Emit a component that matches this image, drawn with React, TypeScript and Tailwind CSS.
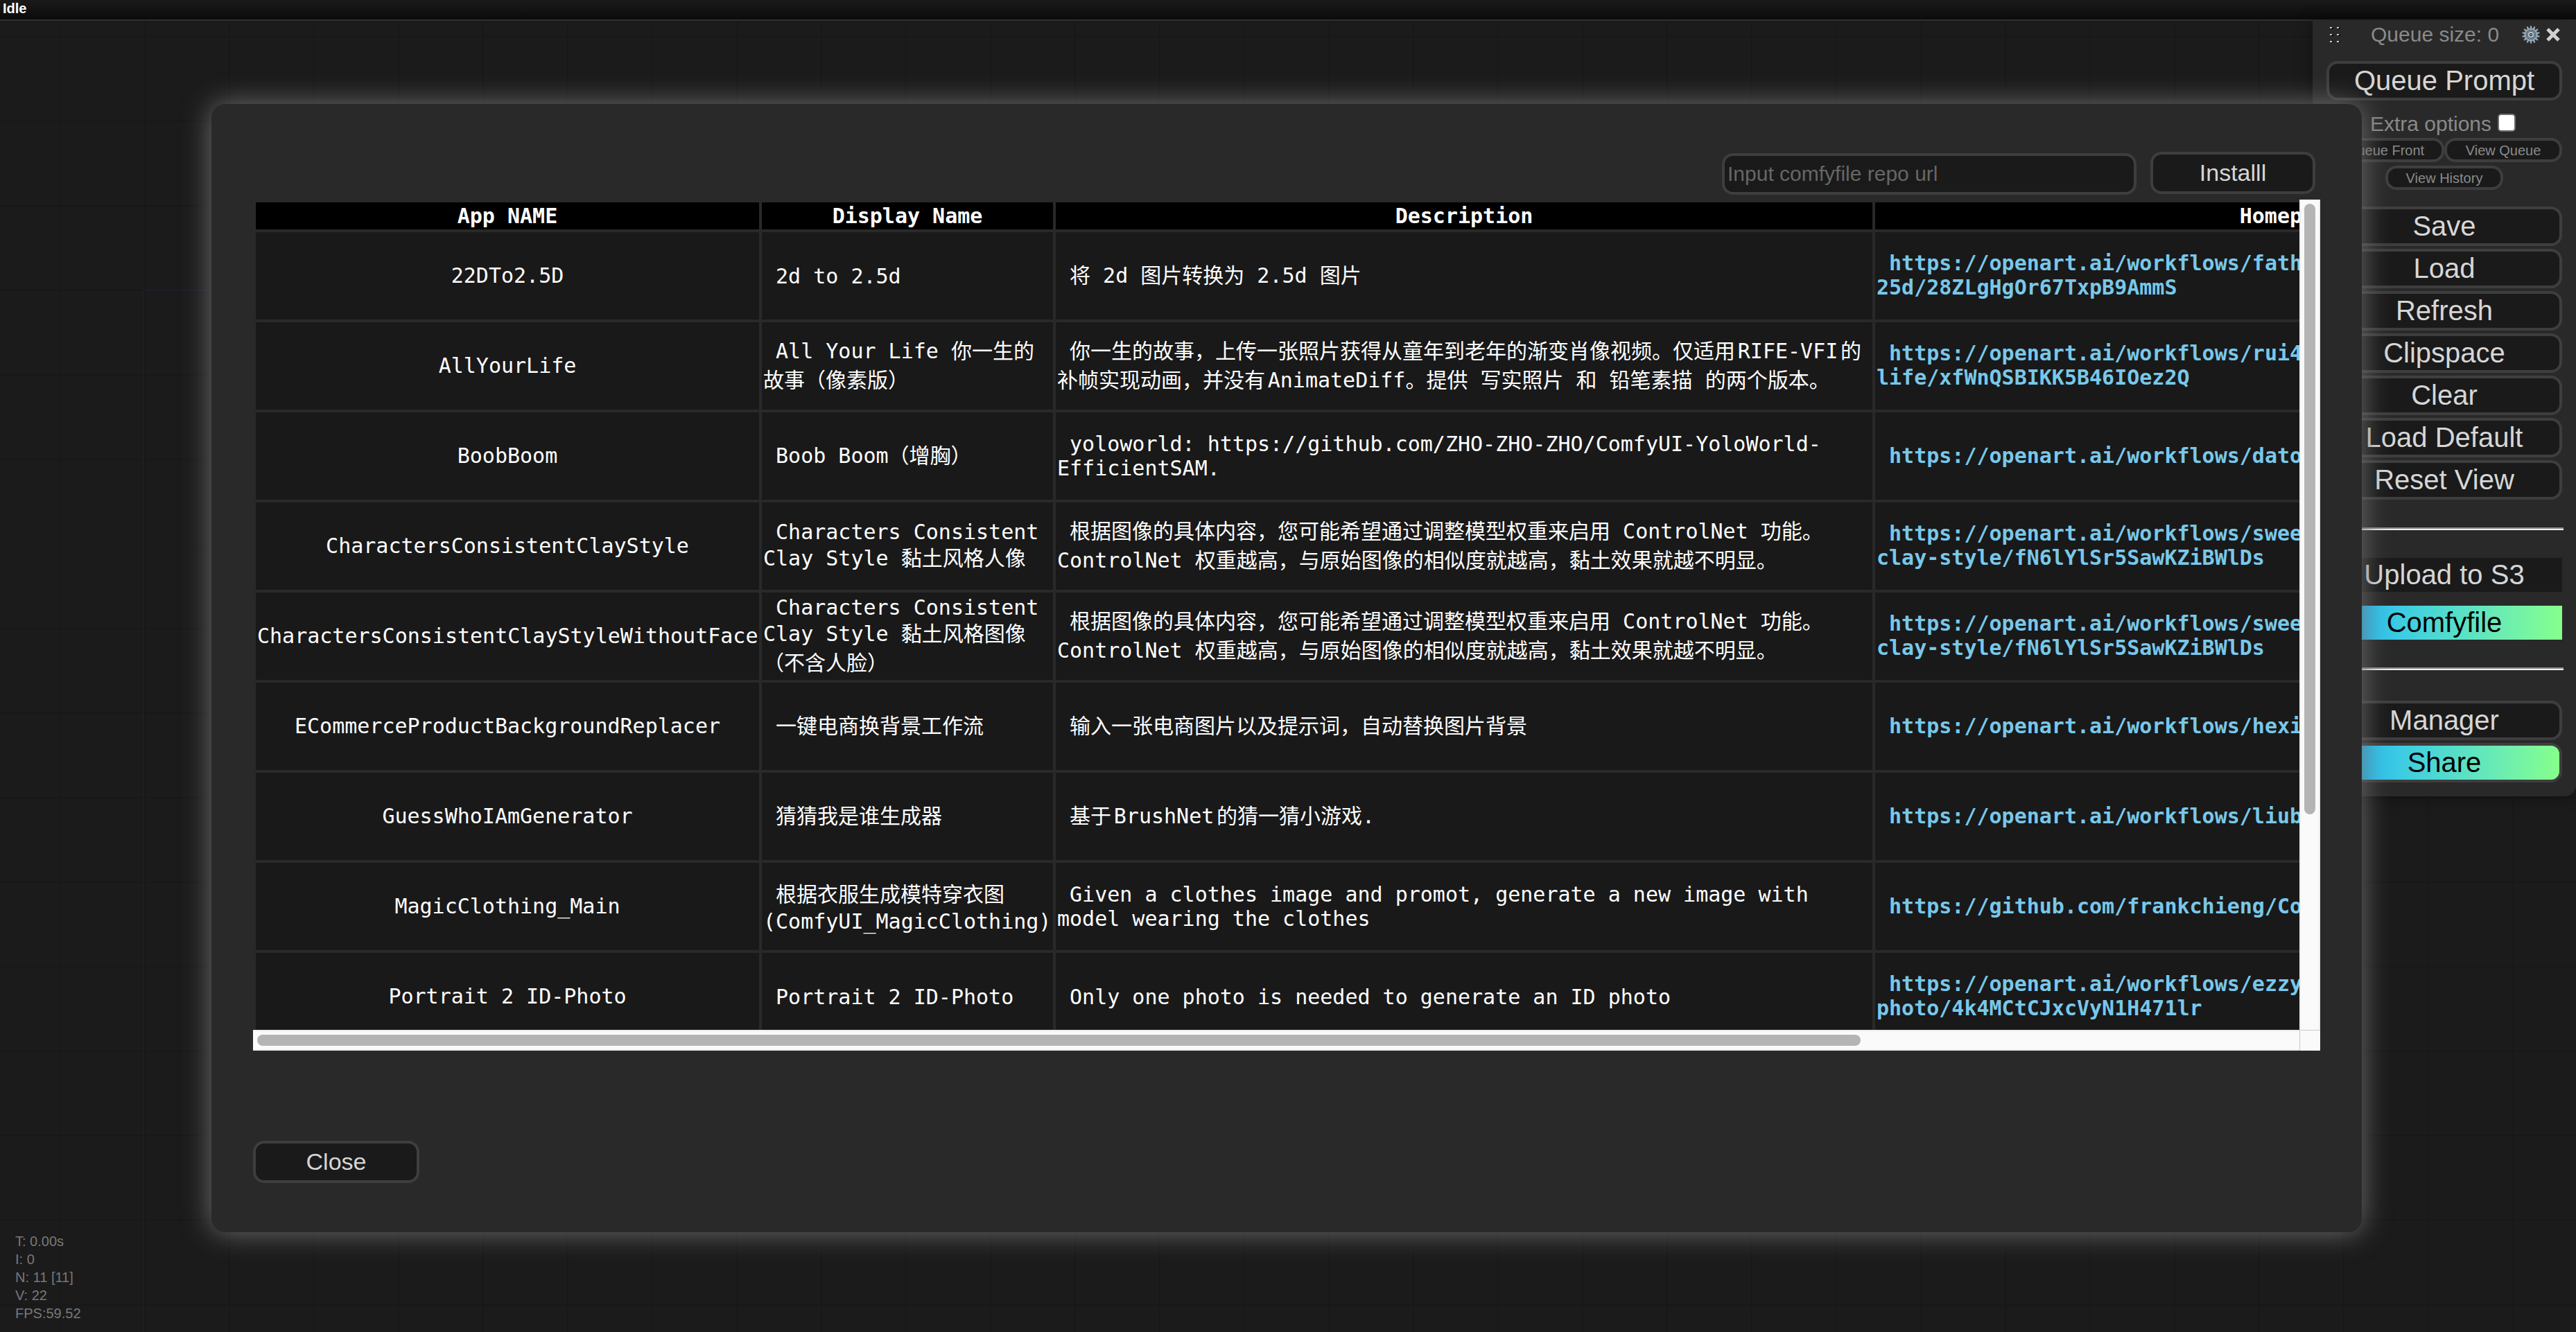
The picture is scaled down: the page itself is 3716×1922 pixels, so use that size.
import React from "react";

type Line = { text: string; tall?: boolean };
type Row = { name: string; display: Line[]; description: Line[]; url: string[] };

const t = (text: string): Line => ({ text, tall: true });
const s = (text: string): Line => ({ text });

const rows: Row[] = [
  {
    name: "22DTo2.5D",
    display: [s(" 2d to 2.5d")],
    description: [t(" 将 2d 图片转换为 2.5d 图片")],
    url: [" https://openart.ai/workflows/father_aquatic_34/2d-to-", "25d/28ZLgHgOr67TxpB9AmmS"],
  },
  {
    name: "AllYourLife",
    display: [t(" All Your Life 你一生的"), t("故事（像素版）")],
    description: [
      t(" 你一生的故事，上传一张照片获得从童年到老年的渐变肖像视频。仅适用RIFE-VFI的"),
      t("补帧实现动画，并没有AnimateDiff。提供 写实照片 和 铅笔素描 的两个版本。"),
    ],
    url: [" https://openart.ai/workflows/rui400/all-your-", "life/xfWnQSBIKK5B46IOez2Q"],
  },
  {
    name: "BoobBoom",
    display: [t(" Boob Boom（增胸）")],
    description: [s(" yoloworld: https://github.com/ZHO-ZHO-ZHO/ComfyUI-YoloWorld-"), s("EfficientSAM.")],
    url: [" https://openart.ai/workflows/datou/boob-boom"],
  },
  {
    name: "CharactersConsistentClayStyle",
    display: [s(" Characters Consistent"), t("Clay Style 黏土风格人像")],
    description: [
      t(" 根据图像的具体内容，您可能希望通过调整模型权重来启用 ControlNet 功能。"),
      t("ControlNet 权重越高，与原始图像的相似度就越高，黏土效果就越不明显。"),
    ],
    url: [" https://openart.ai/workflows/sweet/characters-consistent-", "clay-style/fN6lYlSr5SawKZiBWlDs"],
  },
  {
    name: "CharactersConsistentClayStyleWithoutFace",
    display: [s(" Characters Consistent"), t("Clay Style 黏土风格图像"), t("（不含人脸）")],
    description: [
      t(" 根据图像的具体内容，您可能希望通过调整模型权重来启用 ControlNet 功能。"),
      t("ControlNet 权重越高，与原始图像的相似度就越高，黏土效果就越不明显。"),
    ],
    url: [" https://openart.ai/workflows/sweet/characters-consistent-", "clay-style/fN6lYlSr5SawKZiBWlDs"],
  },
  {
    name: "ECommerceProductBackgroundReplacer",
    display: [t(" 一键电商换背景工作流")],
    description: [t(" 输入一张电商图片以及提示词，自动替换图片背景")],
    url: [" https://openart.ai/workflows/hexin/replacer"],
  },
  {
    name: "GuessWhoIAmGenerator",
    display: [t(" 猜猜我是谁生成器")],
    description: [t(" 基于BrushNet的猜一猜小游戏.")],
    url: [" https://openart.ai/workflows/liubin/guess"],
  },
  {
    name: "MagicClothing_Main",
    display: [t(" 根据衣服生成模特穿衣图"), s("(ComfyUI_MagicClothing)")],
    description: [s(" Given a clothes image and promot, generate a new image with"), s("model wearing the clothes")],
    url: [" https://github.com/frankchieng/ComfyUI_MagicClothing"],
  },
  {
    name: "Portrait 2 ID-Photo",
    display: [s(" Portrait 2 ID-Photo")],
    description: [s(" Only one photo is needed to generate an ID photo")],
    url: [" https://openart.ai/workflows/ezzy/portrait-2-id-", "photo/4k4MCtCJxcVyN1H471lr"],
  },
];

function Lines({ lines }: { lines: Line[] }) {
  return (
    <>
      {lines.map((l) => (
        <span key={l.text} className={l.tall ? "block leading-[42px]" : "block leading-[35px]"}>
          {l.text}
        </span>
      ))}
    </>
  );
}

function MenuButton({ children, share }: { children: React.ReactNode; share?: boolean }) {
  return (
    <button
      type="button"
      className={
        share
          ? "h-[57px] w-full rounded-2xl border-4 border-[#3e3e3e] bg-linear-to-r from-[#14b0ff] to-[#86ff8a] bg-origin-padding pb-0.5 text-[40px] leading-none text-black"
          : "h-[57px] w-full rounded-2xl border-4 border-[#3e3e3e] bg-[#1a1a1a] pb-0.5 text-[40px] leading-none text-[#d6d6d6]"
      }
    >
      {children}
    </button>
  );
}

function SmallButton({ children }: { children: React.ReactNode }) {
  return (
    <button
      type="button"
      className="h-[35px] w-[170px] rounded-2xl border-4 border-[#3e3e3e] bg-[#1a1a1a] text-xl leading-none text-[#8a8a8a]"
    >
      {children}
    </button>
  );
}

const TEETH = Array.from({ length: 14 }, (_, i) => (i * 360) / 14);

function Gear() {
  return (
    <svg viewBox="-13 -13 26 26" className="size-[26px]" aria-hidden="true">
      {TEETH.map((a) => (
        <path key={a} d="M-1.5-9 -0.9-12.8H0.9L1.5-9Z" fill="#93a7b5" transform={`rotate(${a})`} />
      ))}
      <circle r="8.4" fill="#59646d" stroke="#93a7b5" strokeWidth="2.2" />
      <circle r="5.6" fill="none" stroke="#77848e" strokeWidth="1.6" />
      <circle r="3.2" fill="#222d36" stroke="#bcd0de" strokeWidth="1.8" />
      <circle r="1" fill="#bcd0de" />
    </svg>
  );
}

function Menu() {
  return (
    <aside className="absolute top-[30px] right-0 flex w-[380px] flex-col rounded-b-2xl bg-[#292929] px-5 pb-5 shadow-[0_0_24px_rgba(0,0,0,0.4)]">
      <header className="flex h-11 items-center pb-1 text-[30px] leading-none text-[#8a8a8a]">
        <svg viewBox="0 0 16 22" className="ml-1 h-[22px] w-4" aria-hidden="true">
          {[0, 10, 20].map((y) => (
            <g key={y}>
              <rect x="2" y={y + 1} width="4" height="2" fill="#000" />
              <rect x="12" y={y + 1} width="4" height="2" fill="#000" />
              <rect x="1" y={y} width="3" height="2" fill="#ccc" />
              <rect x="11" y={y} width="3" height="2" fill="#ccc" />
            </g>
          ))}
        </svg>
        <span className="ml-11 flex-1">Queue size: 0</span>
        <button type="button" aria-label="Settings">
          <Gear />
        </button>
        <button type="button" aria-label="Close menu" className="mr-0.5 ml-2">
          <svg viewBox="0 0 22 22" className="size-[22px]" aria-hidden="true">
            <path d="M3 3 19 19M19 3 3 19" stroke="#d0d0d0" strokeWidth="5" />
          </svg>
        </button>
      </header>
      <div className="mt-3.5">
        <MenuButton>Queue Prompt</MenuButton>
      </div>
      <label className="mt-[14px] flex h-10 items-center justify-center gap-[9px] pr-1 text-[30px] leading-none text-[#8a8a8a]">
        Extra options
        <input
          type="checkbox"
          className="mb-1 size-[26px] appearance-none rounded-[5px] border-2 border-[#6b6b6b] bg-white"
        />
      </label>
      <div className="flex flex-wrap justify-center gap-y-[5px]">
        <SmallButton>Queue Front</SmallButton>
        <SmallButton>View Queue</SmallButton>
        <SmallButton>View History</SmallButton>
      </div>
      <div className="mt-6 flex flex-col gap-1">
        <MenuButton>Save</MenuButton>
        <MenuButton>Load</MenuButton>
        <MenuButton>Refresh</MenuButton>
        <MenuButton>Clipspace</MenuButton>
        <MenuButton>Clear</MenuButton>
        <MenuButton>Load Default</MenuButton>
        <MenuButton>Reset View</MenuButton>
      </div>
      <hr className="-mx-0.5 mt-10 border-t-2 border-b-2 border-t-[#8a8a8a] border-b-[#eee]" />
      <button type="button" className="mt-10 h-[49px] bg-[#1a1a1a] pb-0.5 text-[40px] leading-none text-[#d6d6d6]">
        Upload to S3
      </button>
      <button
        type="button"
        className="mt-5 h-[49px] bg-linear-to-r from-[#14b0ff] to-[#86ff8a] pb-0.5 text-[40px] leading-none text-black"
      >
        Comfyfile
      </button>
      <hr className="-mx-0.5 mt-10 border-t-2 border-b-2 border-t-[#8a8a8a] border-b-[#eee]" />
      <div className="mt-11 flex flex-col gap-1">
        <MenuButton>Manager</MenuButton>
        <MenuButton share>Share</MenuButton>
      </div>
    </aside>
  );
}

function AppTable() {
  return (
    <div className="grid h-[1228px] grid-cols-[minmax(0,1fr)_30px] grid-rows-[minmax(0,1fr)_30px]">
      <div className="overflow-hidden">
        <table className="w-[3752px] table-fixed border-separate border-spacing-1 font-['DejaVu_Sans_Mono','Noto_Sans_CJK_SC',monospace] text-[30px] whitespace-pre text-white [text-autospace:normal] [text-spacing-trim:space-all]">
          <colgroup>
            <col className="w-[726px]" />
            <col className="w-[420px]" />
            <col className="w-[1178px]" />
            <col className="w-[1196px]" />
            <col />
          </colgroup>
          <thead>
            <tr className="h-[39px] bg-black leading-[35px]">
              <th className="p-0.5">App NAME</th>
              <th className="p-0.5">Display Name</th>
              <th className="p-0.5">Description</th>
              <th className="p-0.5">Homepage</th>
              <th className="p-0.5" />
            </tr>
          </thead>
          <tbody>
            {rows.map((r) => (
              <tr key={r.name} className="h-[126px] bg-[#191919]">
                <td className="px-0.5 pt-0 pb-0.5 text-center leading-[35px]">{r.name}</td>
                <td className="px-0.5 py-0">
                  <Lines lines={r.display} />
                </td>
                <td className="px-0.5 py-0">
                  <Lines lines={r.description} />
                </td>
                <td className="px-0.5 pt-0 pb-0.5">
                  <a href={r.url.join("").trim()} className="font-bold text-[#78c8ea]">
                    <Lines lines={r.url.map(s)} />
                  </a>
                </td>
                <td />
              </tr>
            ))}
          </tbody>
        </table>
      </div>
      <div className="flex justify-center border-x-2 border-[#ececec] bg-[#fafafa] pt-1.5">
        <div className="h-[881px] w-4 rounded-full bg-[#b4b4b4]" />
      </div>
      <div className="flex items-center border-y-2 border-[#ececec] bg-[#fafafa] pl-1.5">
        <div className="h-4 w-[78.5%] rounded-full bg-[#b4b4b4]" />
      </div>
      <div className="border-t border-l border-[#c8c8c8] bg-[#fafafa]" />
    </div>
  );
}

export default function App() {
  return (
    <div className="relative flex min-h-screen flex-col overflow-hidden bg-[#1b1b1b] bg-[linear-gradient(to_right,#181818_2px,transparent_2px),linear-gradient(to_bottom,#181818_2px,transparent_2px)] bg-size-[122px_122px] bg-position-[86px_52px] font-['Liberation_Sans',Arial,sans-serif]">
      <div className="h-[30px] border-b-2 border-[#303030] bg-linear-to-b from-[#1a1a1a] to-[#0b0b0b] pl-1 text-xl leading-6 font-bold text-white">
        Idle
      </div>
      <div className="absolute top-[418px] bottom-0 left-[206px] w-1/2 rounded-tl-sm border-t-2 border-l-2 border-[#1a1f2a]" />
      <Menu />
      <div className="relative flex flex-1 flex-col pt-[120px] pr-[309px] pb-[144px] pl-[305px]">
        <div
          role="dialog"
          className="flex flex-1 flex-col rounded-[20px] bg-[#292929] px-[60px] shadow-[0_0_40px_#707070]"
        >
          <div className="mt-[69px] mb-2 flex h-[61px] items-center justify-end gap-5 pr-[7px]">
            <input
              type="text"
              aria-label="Comfyfile repo url"
              placeholder="Input comfyfile repo url"
              className="mt-0.5 h-[60px] w-[598px] rounded-2xl border-4 border-[#3e3e3e] bg-[#1a1a1a] px-1 text-[30px] text-[#d6d6d6] placeholder:text-[#666]"
            />
            <button
              type="button"
              className="h-[61px] w-[238px] rounded-2xl border-4 border-[#3e3e3e] bg-[#1a1a1a] pb-0.5 text-[34px] leading-none text-[#d6d6d6]"
            >
              Installl
            </button>
          </div>
          <AppTable />
          <button
            type="button"
            className="mt-[130px] h-[61px] w-[240px] rounded-2xl border-4 border-[#3e3e3e] bg-[#1a1a1a] pb-0.5 text-[34px] leading-none text-[#d6d6d6]"
          >
            Close
          </button>
        </div>
      </div>
      <div className="absolute bottom-3.5 left-[22px] text-xl leading-[26px] text-[#787878]">
        <p>T: 0.00s</p>
        <p>I: 0</p>
        <p>N: 11 [11]</p>
        <p>V: 22</p>
        <p>FPS:59.52</p>
      </div>
    </div>
  );
}
